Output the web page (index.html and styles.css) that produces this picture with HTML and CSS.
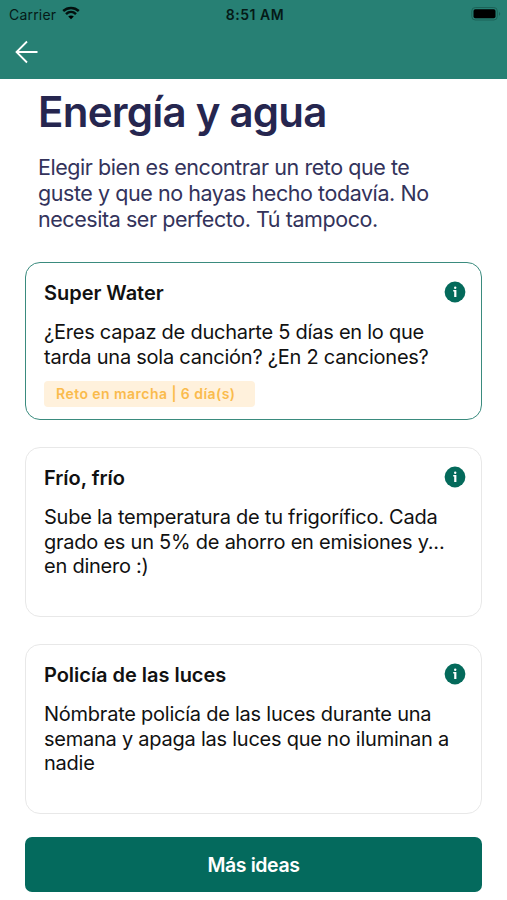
FILE: index.html
```html
<!DOCTYPE html>
<html lang="es">
<head>
<meta charset="utf-8">
<title>Energía y agua</title>
<link rel="stylesheet" href="styles.css">
</head>
<body>
<header class="top">
  <div class="status">
    <div class="carrier"><span>Carrier</span>
      <svg class="wifi" width="18" height="14" viewBox="0 0 18 14"><path d="M1.200 5C5.700.9 12.300.9 16.800 5M4 8.100c2.900-2.700 7.100-2.700 10 0" fill="none" stroke="#03100e" stroke-width="2.500"/><path d="M9 13.300l-2.800-2.800c1.600-1.400 4-1.400 5.600 0z"/></svg>
    </div>
    <span class="time">8:51 AM</span>
    <svg class="battery" width="30" height="14" viewBox="0 0 30 14"><rect x=".8" y=".5" width="25.500" height="12.500" rx="3.500" fill="none" stroke="#1c6358"/><rect x="2.500" y="2.300" width="22" height="9" rx="1.800"/><path d="M28 5c1.600.8 1.600 2.900 0 3.700z" fill="#1c6358"/></svg>
  </div>
  <svg class="back" width="24" height="24" viewBox="0 0 24 24"><path d="M22.500 12H1.500M12 1.500L1.500 12L12 22.500" fill="none" stroke="#fff" stroke-width="1.800"/></svg>
</header>
<main>
  <h1>Energía y agua</h1>
  <p class="intro">Elegir bien es encontrar un reto que te<br>guste y que no hayas hecho todavía. No<br>necesita ser perfecto. Tú tampoco.</p>
  <section class="card active">
    <div class="head"><h2>Super Water</h2><svg class="info" viewBox="0 0 22 22"><circle cx="11" cy="11" r="10.400"/><path d="M9.200 9h3.200v7h-2.200v-5.500h-1z" fill="#fff"/><circle cx="11.200" cy="6.800" r="1.200" fill="#fff"/></svg></div>
    <p>¿Eres capaz de ducharte 5 días en lo que<br>tarda una sola canción? ¿En 2 canciones?</p>
    <div class="badge">Reto en marcha | 6 día(s)</div>
  </section>
  <section class="card">
    <div class="head"><h2>Frío, frío</h2><svg class="info" viewBox="0 0 22 22"><circle cx="11" cy="11" r="10.400"/><path d="M9.200 9h3.200v7h-2.200v-5.500h-1z" fill="#fff"/><circle cx="11.200" cy="6.800" r="1.200" fill="#fff"/></svg></div>
    <p>Sube la temperatura de tu frigorífico. Cada<br>grado es un 5% de ahorro en emisiones y...<br>en dinero :)</p>
  </section>
  <section class="card">
    <div class="head"><h2>Policía de las luces</h2><svg class="info" viewBox="0 0 22 22"><circle cx="11" cy="11" r="10.400"/><path d="M9.200 9h3.200v7h-2.200v-5.500h-1z" fill="#fff"/><circle cx="11.200" cy="6.800" r="1.200" fill="#fff"/></svg></div>
    <p>Nómbrate policía de las luces durante una<br>semana y apaga las luces que no iluminan a<br>nadie</p>
  </section>
  <button>Más ideas</button>
</main>
</body>
</html>
```
FILE: styles.css
```css
* { box-sizing: border-box; }
body { margin: 0; height: 900px; overflow: hidden; background: #fff; color: #111; font-family: Inter, sans-serif; }
.top { height: 79px; background: #278074; }
.status { height: 28px; padding: 0 6px 0 9px; display: grid; grid-template-columns: 1fr auto 1fr; align-items: center; font-size: 14px; color: #051a17; }
.carrier { display: flex; align-items: center; gap: 6px; letter-spacing: 0.2px; }
.wifi { margin-top: -2px; }
.time { font-weight: 600; letter-spacing: 0.5px; }
.battery { justify-self: end; margin-top: -1px; }
.back { display: block; margin: 12px 0 0 15px; }
h1, h2, p { margin: 0; }
main { padding: 0 25px; }
h1 { height: 75px; padding: 8px 0 0 13px; font-size: 42px; line-height: 50px; font-weight: 600; letter-spacing: -0.75px; color: #26264f; white-space: nowrap; }
.intro { height: 108px; padding-left: 13px; font-size: 21.5px; line-height: 26.2px; letter-spacing: -0.44px; color: #33335b; white-space: nowrap; }
.card { height: 170px; margin-bottom: 27px; padding: 18px 15px 0 18px; border: 1px solid #e8e8e8; border-radius: 15px; }
.card.active { height: 158px; border: 1.5px solid #3a8b7e; }
.head { display: flex; justify-content: space-between; align-items: center; height: 24px; }
h2 { font-size: 20px; line-height: 24px; font-weight: 600; letter-spacing: -0.03px; }
.info { width: 22px; height: 22px; margin-top: -2px; fill: #046a5b; }
.card p { margin-top: 15px; font-size: 20px; line-height: 24.5px; letter-spacing: -0.24px; white-space: nowrap; }
.badge { width: 211px; height: 26px; margin-top: 12px; padding-left: 12px; border-radius: 4px; background: #fff1dc; color: #fabb4c; font-size: 14px; line-height: 26px; font-weight: 600; letter-spacing: 0.45px; }
button { display: block; width: 100%; height: 55px; margin-top: -4px; padding: 0; border: 0; border-radius: 7px; background: #046a5d; color: #fff; font: 600 19.5px Inter, sans-serif; letter-spacing: -0.4px; }
```
